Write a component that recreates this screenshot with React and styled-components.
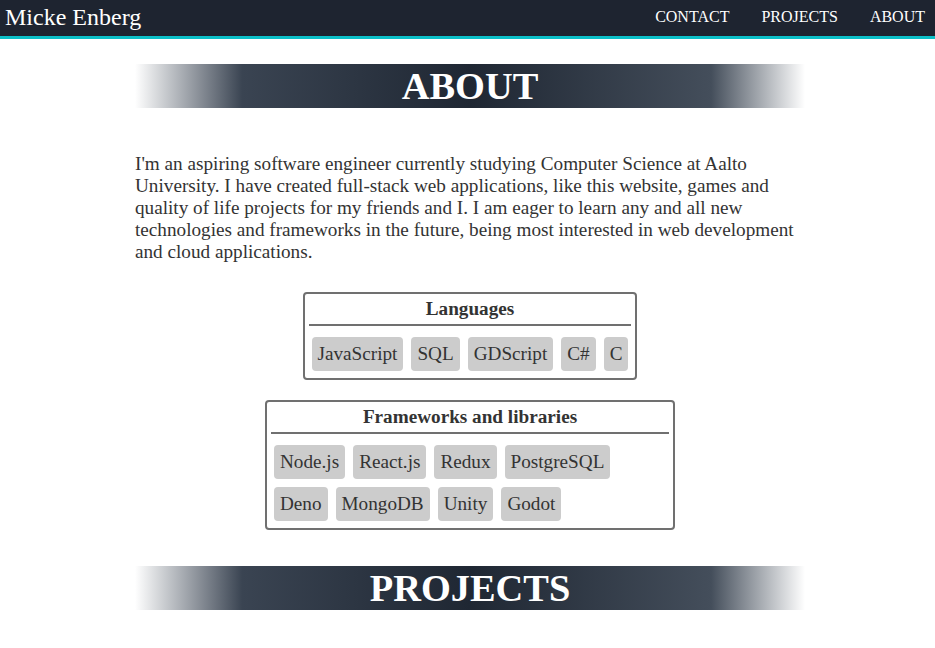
import React from "react";
import styled, { createGlobalStyle } from "styled-components";

const GlobalStyle = createGlobalStyle`
  html, body {
    margin: 0;
    padding: 0;
    background: #ffffff;
    font-family: "Liberation Serif", "Times New Roman", serif;
  }
`;

const NavBar = styled.nav`
  display: flex;
  align-items: center;
  justify-content: space-between;
  box-sizing: border-box;
  height: 39px;
  padding: 0 10px 2px 5px;
  background: #1e2430;
  border-bottom: 3px solid #0cc0c8;
`;

const Brand = styled.span`
  color: #ffffff;
  font-size: 24px;
  line-height: 28px;
`;

const NavLinks = styled.div`
  display: flex;
  gap: 32px;
`;

const NavLink = styled.a`
  color: #ffffff;
  font-size: 16px;
  line-height: 20px;
  text-decoration: none;
  text-transform: uppercase;
`;

const Main = styled.main`
  width: 670px;
  margin: 0 auto;
  padding-left: 5px;
  display: flex;
  flex-direction: column;
  align-items: center;
`;

const SectionHeading = styled.h2`
  align-self: stretch;
  margin: ${(p) => p.$top}px 0 0;
  height: 44px;
  line-height: 44px;
  text-align: center;
  color: #ffffff;
  font-size: 38.4px;
  font-weight: bold;
  background: linear-gradient(
    to right,
    rgba(255, 255, 255, 0) 0%,
    #3a4452 16%,
    #1f2733 50%,
    #444e5b 86%,
    rgba(255, 255, 255, 0) 100%
  );
`;

const Paragraph = styled.p`
  align-self: stretch;
  margin: 45px 0 29px;
  color: #333333;
  font-size: 19.2px;
  line-height: 22px;
`;

const SkillBox = styled.section`
  box-sizing: border-box;
  width: ${(p) => p.$width};
  border: 2px solid #707070;
  border-radius: 4px;
  margin-bottom: ${(p) => p.$bottom}px;
`;

const BoxTitle = styled.h3`
  margin: 0 4px;
  padding: 4px 0;
  line-height: 22px;
  font-size: 19.2px;
  font-weight: bold;
  text-align: center;
  color: #333333;
  border-bottom: 2px solid #707070;
`;

const TagList = styled.div`
  display: flex;
  flex-wrap: wrap;
  gap: 8px;
  padding: 11px 7px 7px;
`;

const Tag = styled.span`
  background: #cccccc;
  color: #333333;
  border-radius: 4px;
  font-size: 19.2px;
  line-height: 22px;
  padding: 6px 6px;
`;

const languages = ["JavaScript", "SQL", "GDScript", "C#", "C"];
const frameworks = [
  "Node.js",
  "React.js",
  "Redux",
  "PostgreSQL",
  "Deno",
  "MongoDB",
  "Unity",
  "Godot",
];

export default function App() {
  return (
    <>
      <GlobalStyle />
      <NavBar>
        <Brand>Micke Enberg</Brand>
        <NavLinks>
          <NavLink href="#contact">Contact</NavLink>
          <NavLink href="#projects">Projects</NavLink>
          <NavLink href="#about">About</NavLink>
        </NavLinks>
      </NavBar>
      <Main>
        <SectionHeading $top={25}>ABOUT</SectionHeading>
        <Paragraph>
          I'm an aspiring software engineer currently studying Computer Science at
          Aalto University. I have created full-stack web applications, like this
          website, games and quality of life projects for my friends and I. I am
          eager to learn any and all new technologies and frameworks in the future,
          being most interested in web development and cloud applications.
        </Paragraph>
        <SkillBox $width="fit-content" $bottom={20}>
          <BoxTitle>Languages</BoxTitle>
          <TagList>
            {languages.map((l) => (
              <Tag key={l}>{l}</Tag>
            ))}
          </TagList>
        </SkillBox>
        <SkillBox $width="410px" $bottom={0}>
          <BoxTitle>Frameworks and libraries</BoxTitle>
          <TagList>
            {frameworks.map((f) => (
              <Tag key={f}>{f}</Tag>
            ))}
          </TagList>
        </SkillBox>
        <SectionHeading $top={36}>PROJECTS</SectionHeading>
      </Main>
    </>
  );
}
